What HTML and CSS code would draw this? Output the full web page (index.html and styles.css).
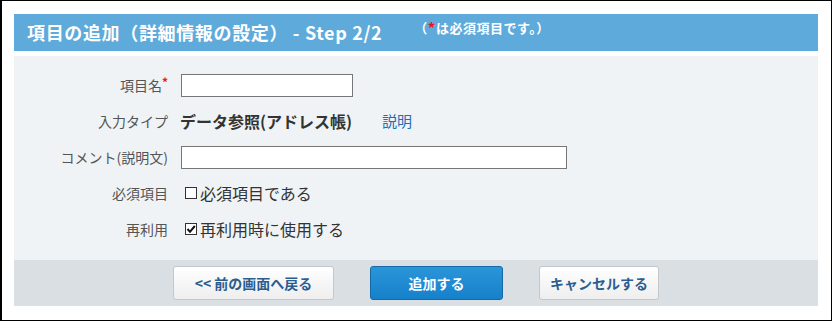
FILE: index.html
```html
<!DOCTYPE html>
<html lang="ja">
<head>
<meta charset="utf-8">
<title>項目の追加</title>
<link rel="stylesheet" href="styles.css">
</head>
<body>
<div class="frame">
  <div class="panel">
    <div class="header">
      <h1 class="title">項目の追加（詳細情報の設定） - Step 2/2</h1>
      <span class="note">（<span class="req">*</span>は必須項目です。）</span>
    </div>
    <div class="form">
      <div class="row">
        <div class="label">項目名<span class="req">*</span></div>
        <div class="field"><input class="text short" type="text"></div>
      </div>
      <div class="row">
        <div class="label">入力タイプ</div>
        <div class="field"><span class="value">データ参照(アドレス帳)</span><a class="link" href="#">説明</a></div>
      </div>
      <div class="row">
        <div class="label">コメント(説明文)</div>
        <div class="field"><input class="text long" type="text"></div>
      </div>
      <div class="row">
        <div class="label">必須項目</div>
        <div class="field"><span class="check"></span><span class="option">必須項目である</span></div>
      </div>
      <div class="row">
        <div class="label">再利用</div>
        <div class="field"><span class="check"><svg viewBox="0 0 10 10" width="10" height="10"><path d="M1.5 5 L4 7.8 L8.8 2" fill="none" stroke="#111" stroke-width="2"/></svg></span><span class="option">再利用時に使用する</span></div>
      </div>
    </div>
    <div class="footer">
      <button class="btn back" type="button">&lt;&lt; 前の画面へ戻る</button>
      <button class="btn primary" type="button">追加する</button>
      <button class="btn cancel" type="button">キャンセルする</button>
    </div>
  </div>
</div>
</body>
</html>
```
FILE: styles.css
```css
html, body {
  margin: 0;
  padding: 0;
  background: #fff;
}
body {
  font-family: "Noto Sans CJK JP", "Noto Sans", sans-serif;
}
.frame {
  box-sizing: border-box;
  width: 832px;
  height: 321px;
  border: 1px solid #000;
  border-left-width: 2px;
  padding: 13px 13px 0 12px;
}
.panel {
  width: 804px;
}
.header {
  height: 37px;
  background: #5eaadb;
  display: flex;
  align-items: flex-start;
  padding-left: 13px;
  box-sizing: border-box;
}
.title {
  margin: 0;
  font-size: 18px;
  font-weight: bold;
  color: #fff;
  line-height: 37px;
  letter-spacing: 0.65px;
}
.note {
  margin-left: 32px;
  font-size: 13px;
  font-weight: bold;
  color: #fff;
  line-height: 15px;
  padding-top: 6px;
  letter-spacing: 0.5px;
}
.note .req {
  font-size: 15px;
  line-height: 15px;
  vertical-align: -1px;
}
.req {
  color: #e8141b;
  font-weight: bold;
}
.form {
  margin-top: 5px;
  background: #eff3f6;
  padding: 11px 0 13px;
}
.row {
  display: grid;
  grid-template-columns: 154px 1fr;
  column-gap: 12px;
  height: 36px;
  align-items: center;
}
.label {
  text-align: right;
  font-size: 14px;
  color: #555;
  line-height: 18px;
}
.label .req {
  font-size: 12px;
  vertical-align: top;
  line-height: 12px;
}
.field {
  display: flex;
  align-items: center;
}
.text {
  box-sizing: border-box;
  height: 23px;
  border: 1px solid #777;
  background: #fff;
  margin: 0 0 0 1px;
  padding: 0 4px;
}
.short { width: 172px; }
.long { width: 386px; }
.value {
  font-size: 16px;
  font-weight: bold;
  color: #333;
  line-height: 20px;
}
.link {
  margin-left: 30px;
  font-size: 15px;
  color: #1d6fb8;
  text-decoration: none;
  line-height: 20px;
}
.check {
  box-sizing: border-box;
  width: 12px;
  height: 12px;
  border: 1px solid #333;
  background: #fff;
  margin-left: 5px;
  margin-right: 3px;
  display: flex;
  align-items: center;
  justify-content: center;
}
.check svg {
  display: block;
}
.option {
  font-size: 16px;
  color: #333;
  line-height: 20px;
}
.footer {
  background: #dadfe3;
  height: 46px;
  display: flex;
  justify-content: center;
  align-items: center;
  gap: 36px;
}
.btn {
  box-sizing: border-box;
  height: 34px;
  border-radius: 3px;
  font-family: "Noto Sans CJK JP", "Noto Sans", sans-serif;
  font-size: 14px;
  font-weight: bold;
  padding: 0;
  cursor: pointer;
}
.back, .cancel {
  background: linear-gradient(#ffffff, #eeeeee);
  border: 1px solid #c4c8cb;
  color: #2a5e91;
}
.back { width: 161px; }
.cancel { width: 120px; }
.primary {
  width: 133px;
  background: linear-gradient(#2b95d8, #1681cb);
  border: 1px solid #1569a6;
  color: #fff;
}
```
